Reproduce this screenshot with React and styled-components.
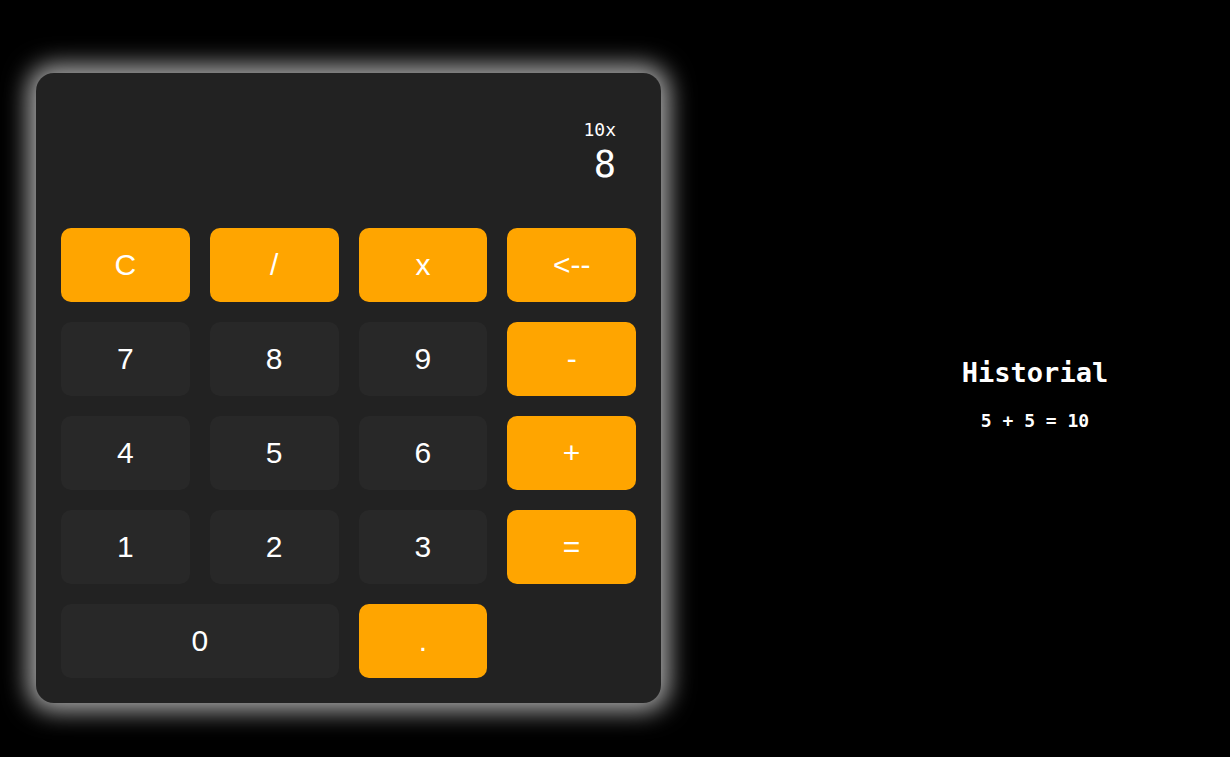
import styled, { createGlobalStyle } from 'styled-components'

const GlobalStyle = createGlobalStyle`
  * {
    box-sizing: border-box;
  }
  body {
    margin: 0;
    background: #000;
    color: #fff;
    font-family: "Liberation Sans", Arial, sans-serif;
  }
`

const keys = [
  { label: 'C', op: true },
  { label: '/', op: true },
  { label: 'x', op: true },
  { label: '<--', op: true },
  { label: '7' },
  { label: '8' },
  { label: '9' },
  { label: '-', op: true },
  { label: '4' },
  { label: '5' },
  { label: '6' },
  { label: '+', op: true },
  { label: '1' },
  { label: '2' },
  { label: '3' },
  { label: '=', op: true },
  { label: '0', wide: true },
  { label: '.', op: true },
]

const history = ['5 + 5 = 10']

export default function App() {
  return (
    <>
      <GlobalStyle />
      <Page>
        <Calculator>
          <Display>
            <Previous>10x</Previous>
            <Current>8</Current>
          </Display>
          <Keypad>
            {keys.map((k) => (
              <Key key={k.label} $op={k.op} $wide={k.wide}>
                {k.label}
              </Key>
            ))}
          </Keypad>
        </Calculator>
        <History>
          <HistoryTitle>Historial</HistoryTitle>
          {history.map((h) => (
            <HistoryItem key={h}>{h}</HistoryItem>
          ))}
        </History>
      </Page>
    </>
  )
}

const Page = styled.main`
  display: flex;
  align-items: center;
  min-height: 757px;
  padding: 18px 0 0 36px;
`

const Calculator = styled.section`
  width: 625px;
  padding: 25px;
  background: #222;
  border-radius: 18px;
  box-shadow: 0 0 24px 8px #aaa;
`

const Display = styled.div`
  height: 110px;
  margin-bottom: 20px;
  padding: 0 20px 22px;
  display: flex;
  flex-direction: column;
  justify-content: flex-end;
  align-items: flex-end;
  font-family: "DejaVu Sans Mono", "Liberation Mono", monospace;
`

const Previous = styled.div`
  font-size: 18px;
  color: #fff;
  margin-bottom: 3px;
`

const Current = styled.div`
  font-size: 37px;
  color: #fff;
`

const Keypad = styled.div`
  display: grid;
  grid-template-columns: repeat(4, 1fr);
  grid-auto-rows: 74px;
  gap: 20px;
`

const Key = styled.button`
  grid-column: ${(p) => (p.$wide ? 'span 2' : 'auto')};
  border: none;
  border-radius: 10px;
  background: ${(p) => (p.$op ? '#ffa500' : '#282828')};
  color: #fff;
  font-family: "Liberation Sans", Arial, sans-serif;
  font-size: 30px;
  cursor: pointer;
`

const History = styled.aside`
  flex: 1;
  margin-left: 179px;
  padding-top: 12px;
  display: flex;
  flex-direction: column;
  align-items: center;
  font-family: "DejaVu Sans Mono", "Liberation Mono", monospace;
  font-weight: bold;
`

const HistoryTitle = styled.h2`
  margin: 0 0 22px;
  font-size: 27px;
`

const HistoryItem = styled.p`
  margin: 0;
  font-size: 18px;
`
